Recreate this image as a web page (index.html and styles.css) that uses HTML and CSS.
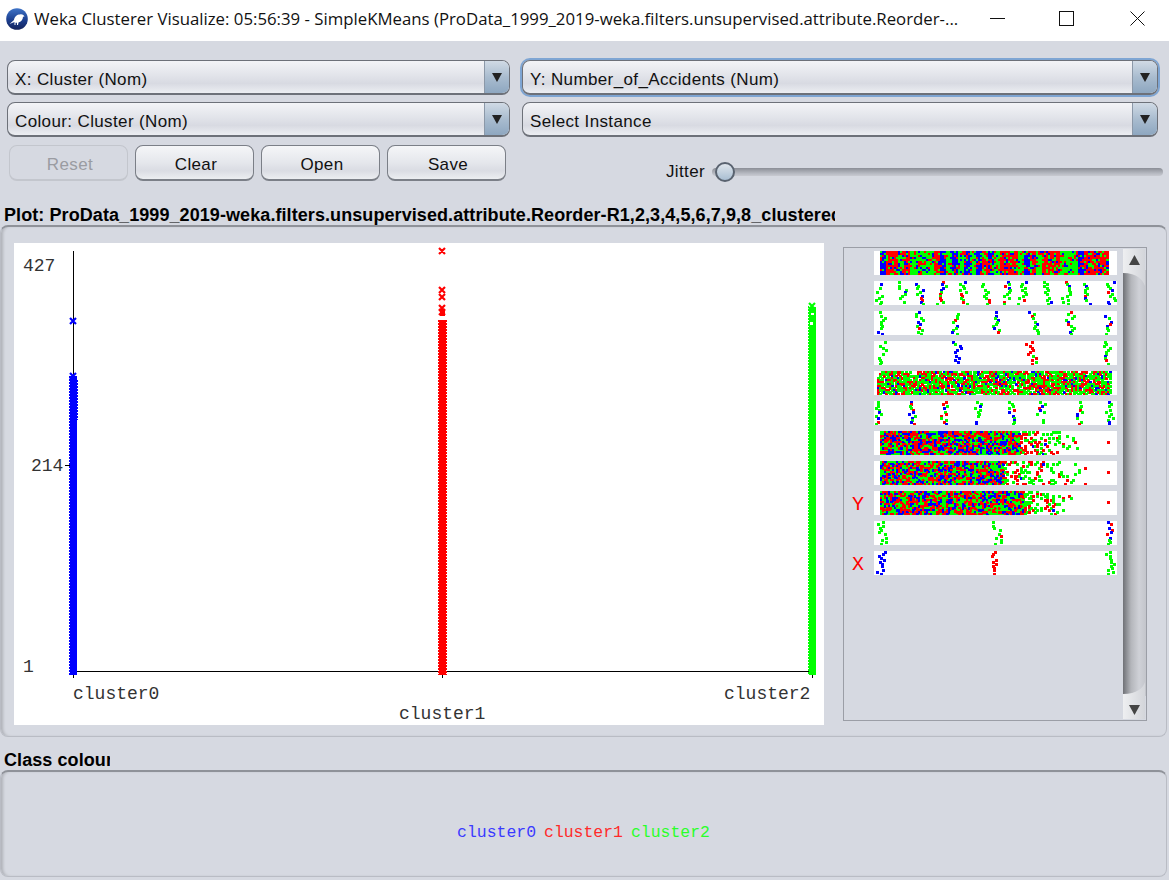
FILE: index.html
```html
<!DOCTYPE html>
<html lang="en">
<head>
    <meta charset="UTF-8">
    <title>Weka Clusterer Visualize</title>

    <link rel="stylesheet" href="styles.css">

</head>
<body>

<div class="titlebar">
    <svg class="app_icon" width="22" height="22" viewBox="0 0 22 22">
        <defs>
            <linearGradient id="icon_fill" x1="0" y1="0" x2="0" y2="1">
                <stop offset="0" stop-color="#3f74c8"/>
                <stop offset="0.55" stop-color="#1c3f8f"/>
                <stop offset="1" stop-color="#14235c"/>
            </linearGradient>
        </defs>
        <circle cx="11" cy="11" r="10.800" fill="url(#icon_fill)"/>
        <path d="M3.500 16 L8 12 C8.500 8.500 11 6.500 14 6.500 C15.500 6 17.500 6.500 18.500 8.500 L17 8.800 C17 11.500 15 14 12.500 14.500 L12 17 L11 17 L11 14.800 L9.500 14.800 L9.500 17 L8.500 17 L8.500 14 C7 14.800 5 15.500 3.500 16 Z" fill="#fff"/>
    </svg>
    <div class="title_text">Weka Clusterer Visualize: 05:56:39 - SimpleKMeans (ProData_1999_2019-weka.filters.unsupervised.attribute.Reorder-...</div>
    <svg class="win_btn win_min" width="15" height="15" viewBox="0 0 15 15"><path d="M0 7.500 H15" stroke="#111" fill="none"/></svg>
    <svg class="win_btn win_max" width="15" height="15" viewBox="0 0 15 15"><rect x="0.500" y="0.500" width="14" height="14" stroke="#111" fill="none"/></svg>
    <svg class="win_btn" width="15" height="15" viewBox="0 0 15 15"><path d="M0.500 0.500 L14.500 14.500 M14.500 0.500 L0.500 14.500" stroke="#111" fill="none"/></svg>
</div>

<div class="toolbar">
    <div class="tool_col tool_left">
        <div class="combo"><span class="combo_text">X: Cluster (Nom)</span><span class="combo_arrow"></span></div>
        <div class="combo"><span class="combo_text">Colour: Cluster (Nom)</span><span class="combo_arrow"></span></div>
        <div class="btn_row">
            <div class="btn btn_off">Reset</div>
            <div class="btn">Clear</div>
            <div class="btn">Open</div>
            <div class="btn">Save</div>
        </div>
    </div>
    <div class="tool_col tool_right">
        <div class="combo combo_focus"><span class="combo_text">Y: Number_of_Accidents (Num)</span><span class="combo_arrow"></span></div>
        <div class="combo"><span class="combo_text">Select Instance</span><span class="combo_arrow"></span></div>
        <div class="jitter">
            <span class="jitter_label">Jitter</span>
            <div class="slider"><span class="slider_thumb"></span></div>
        </div>
    </div>
</div>

<div class="heading heading_plot">Plot: ProData_1999_2019-weka.filters.unsupervised.attribute.Reorder-R1,2,3,4,5,6,7,9,8_clustered</div>
<div class="panel plot_panel">
    <svg class="plot" width="810" height="482" viewBox="14 243 810 482">
        <!-- 坐标轴 -->
        <g class="axis">
            <path d="M73.500 251 V678 M73 671.500 H812 M442.500 671 V678 M812.500 671 V678 M65 465.500 H70"/>
        </g>
        <!-- cluster0 -->
        <g class="col_blue">
            <rect x="70" y="376" width="7" height="299"/>
            <path class="edge" d="M69.500 376 V675 M77.500 380 V420"/>
            <path class="mark" d="M70 373 L76 379 M76 373 L70 379 M70 318 L76 324 M76 318 L70 324"/>
        </g>
        <!-- cluster1 -->
        <g class="col_red">
            <rect x="439" y="320" width="7" height="355"/>
            <path class="edge" d="M438.500 320 V675 M446.500 320 V675"/>
            <path class="mark" d="M439 248 L445 254 M445 248 L439 254 M439 287 L445 293 M445 287 L439 293 M439 294 L445 300 M445 294 L439 300 M439 305 L445 311 M445 305 L439 311 M439 309 L445 315 M445 309 L439 315"/>
            <rect x="440" y="309" width="5" height="7"/>
        </g>
        <!-- cluster2 -->
        <g class="col_green">
            <rect x="809" y="307" width="7" height="368"/>
            <path class="edge" d="M808.500 306 V675"/>
            <path class="mark" d="M809 303 L815 309 M815 303 L809 309"/>
            <rect class="hole" x="811" y="313" width="3" height="2"/>
            <rect class="hole" x="810" y="322" width="3" height="3"/>
        </g>
        <text x="23" y="271">427</text>
        <text x="31" y="471">214</text>
        <text x="23" y="672">1</text>
        <text x="73" y="699">cluster0</text>
        <text x="399" y="719">cluster1</text>
        <text x="724" y="699">cluster2</text>
    </svg>

    <div class="matrix">
        <div class="strips">
            <div class="strip_row"><span class="axis_tag"></span><canvas class="strip" width="243" height="24"></canvas></div>
            <div class="strip_row"><span class="axis_tag"></span><canvas class="strip" width="243" height="24"></canvas></div>
            <div class="strip_row"><span class="axis_tag"></span><canvas class="strip" width="243" height="24"></canvas></div>
            <div class="strip_row"><span class="axis_tag"></span><canvas class="strip" width="243" height="24"></canvas></div>
            <div class="strip_row"><span class="axis_tag"></span><canvas class="strip" width="243" height="24"></canvas></div>
            <div class="strip_row"><span class="axis_tag"></span><canvas class="strip" width="243" height="24"></canvas></div>
            <div class="strip_row"><span class="axis_tag"></span><canvas class="strip" width="243" height="24"></canvas></div>
            <div class="strip_row"><span class="axis_tag"></span><canvas class="strip" width="243" height="24"></canvas></div>
            <div class="strip_row"><span class="axis_tag">Y</span><canvas class="strip" width="243" height="24"></canvas></div>
            <div class="strip_row"><span class="axis_tag"></span><canvas class="strip" width="243" height="24"></canvas></div>
            <div class="strip_row"><span class="axis_tag">X</span><canvas class="strip" width="243" height="24"></canvas></div>
        </div>
        <svg class="scroll" width="23" height="472" viewBox="0 0 23 472">
            <defs>
                <linearGradient id="thumb_fill">
                    <stop offset="0" stop-color="#6f7176"/>
                    <stop offset="0.35" stop-color="#b4b6bb"/>
                    <stop offset="0.7" stop-color="#cfd1d7"/>
                    <stop offset="1" stop-color="#c3c5cb"/>
                </linearGradient>
                <linearGradient id="btn_fill">
                    <stop offset="0" stop-color="#eeeff1"/>
                    <stop offset="1" stop-color="#d3d5da"/>
                </linearGradient>
            </defs>
            <rect x="0" y="22" width="23" height="426" fill="url(#thumb_fill)"/>
            <path d="M1 1 H22 V38 C20 32 14 25 0 25 V1 Z" fill="url(#btn_fill)"/>
            <path d="M11.500 7 L17 17 H6 Z" fill="#444"/>
            <path d="M1 471 H22 V434 C20 440 14 446 0 446 V471 Z" fill="url(#btn_fill)"/>
            <path d="M11.500 467 L6 457 H17 Z" fill="#444"/>
        </svg>
    </div>
</div>

<div class="heading heading_class">Class colour</div>
<div class="panel legend_panel">
    <span class="legend_item legend_blue">cluster0</span>
    <span class="legend_item legend_red">cluster1</span>
    <span class="legend_item legend_green">cluster2</span>
</div>

<script src="script.js"></script>

</body>
</html>
```

FILE: styles.css
```css
* {
    margin: 0;
    padding: 0;
    box-sizing: border-box;
}

body {
    width: 1169px;
    height: 880px;
    overflow: hidden;
    background-color: #d6d9e1;
    font-family: "Liberation Sans", Arial, sans-serif;
    font-size: 17px;
    letter-spacing: 0.37px;
    color: #111;
}

/* 标题栏 */
.titlebar {
    height: 41px;
    background-color: #fff;
    display: flex;
    align-items: center;
    padding: 0 24px 4px 6px;
}

.app_icon {
    flex: none;
    margin-right: 6px;
}

.title_text {
    flex: 1;
    font-family: "Open Sans", sans-serif;
    font-size: 16.800px;
    letter-spacing: 0;
    white-space: nowrap;
    overflow: hidden;
}

.win_btn {
    flex: none;
}

.win_min {
    margin-right: 54px;
}

.win_max {
    margin-right: 56px;
}

/* 工具区 */
.toolbar {
    display: flex;
    gap: 12px;
    padding: 19px 0 0 7px;
}

.tool_col {
    display: flex;
    flex-direction: column;
    gap: 7px;
}

.tool_left {
    width: 503px;
}

.tool_right {
    width: 636px;
}

.combo {
    height: 35px;
    display: flex;
    border: 1px solid #6d7179;
    border-bottom-width: 2px;
    border-radius: 8px;
    overflow: hidden;
    background: linear-gradient(#f3f4f7, #e2e4ea 45%, #d8dae2 70%, #eceef2);
}

.combo_focus {
    box-shadow: 0 0 0 2px #7ea5d3;
}

.combo_text {
    flex: 1;
    line-height: 37px;
    padding-left: 7px;
}

.combo_arrow {
    flex: none;
    width: 25px;
    display: flex;
    align-items: center;
    justify-content: center;
    border-left: 1px solid #8b98a8;
    background: linear-gradient(#d0dae5, #a9bccf 50%, #8ea7c0);
}

.combo_arrow::after {
    content: "";
    border-left: 5px solid transparent;
    border-right: 5px solid transparent;
    border-top: 9px solid #222;
}

.btn_row {
    display: flex;
    gap: 7px;
    margin: 1px 0 0 2px;
}

.btn {
    width: 119px;
    height: 36px;
    line-height: 36px;
    padding: 1px 0 0 3px;
    text-align: center;
    border: 1px solid #7b7f87;
    border-bottom-width: 2px;
    border-radius: 8px;
    background: linear-gradient(#f5f6f8, #e5e7ec 50%, #dadce3 75%, #eceef1);
}

.btn_off {
    color: #9a9ca2;
    border-color: #c3c6cd;
    background: #d6d9e1;
}

.jitter {
    height: 36px;
    display: flex;
    align-items: center;
    padding: 18px 0 0 144px;
    margin-top: 1px;
}

.jitter_label {
    width: 46px;
    flex: none;
}

.slider {
    flex: none;
    width: 451px;
    height: 8px;
    position: relative;
    border-radius: 4px;
    background: linear-gradient(#8b8e96, #b8bbc3 70%, #c8cad1);
}

.slider_thumb {
    position: absolute;
    left: 3px;
    top: -6px;
    width: 20px;
    height: 20px;
    border: 2px solid #59626f;
    border-radius: 50%;
    background: linear-gradient(#dfe5ec, #a9bed2);
}

/* 分组标题 */
.heading {
    height: 19px;
    line-height: 19px;
    font-size: 18px;
    font-weight: bold;
    letter-spacing: 0.08px;
    padding-left: 4px;
    white-space: nowrap;
    overflow: hidden;
    color: #000;
}

.heading_plot {
    width: 835px;
    margin-top: 25px;
}

.heading_class {
    width: 110px;
    margin-top: 14px;
}

.panel {
    width: 1167px;
    border: 1px solid #b9bcc4;
    border-top: 2px solid #8f9299;
    border-radius: 8px;
    box-shadow: inset 3px 0 3px -1px rgba(0, 0, 0, 0.18);
}

.plot_panel {
    height: 512px;
    margin-top: 0;
    display: flex;
    align-items: flex-start;
    padding: 16px 0 0 13px;
}

/* 散点图 */
.plot {
    flex: none;
    display: block;
    background-color: #fff;
}

.plot text {
    font-family: "Liberation Mono", monospace;
    font-size: 18px;
    letter-spacing: 0;
    fill: #333;
}

.axis path {
    stroke: #000;
    fill: none;
    shape-rendering: crispEdges;
}

.edge {
    stroke-width: 1;
    stroke-dasharray: 2 1;
    fill: none;
    shape-rendering: crispEdges;
}

.mark {
    stroke-width: 2.200;
    fill: none;
}

.col_blue rect { fill: #0000ff; }
.col_blue path { stroke: #0000ff; }
.col_red rect { fill: #ff0000; }
.col_red path { stroke: #ff0000; }
.col_green rect { fill: #00ff00; }
.col_green path { stroke: #00ff00; }
.col_green .hole { fill: #fff; }

/* 散点矩阵 */
.matrix {
    flex: none;
    width: 304px;
    height: 474px;
    margin: 4px 0 0 19px;
    display: flex;
    border: 1px solid #9b9ea6;
}

.strips {
    flex: none;
    width: 279px;
    padding: 3px 0 0 1px;
    display: flex;
    flex-direction: column;
    gap: 6px;
}

.strip_row {
    height: 24px;
    display: flex;
    align-items: center;
}

.axis_tag {
    flex: none;
    width: 29px;
    padding: 3px 0 0 7px;
    font-family: "Liberation Mono", monospace;
    font-size: 20px;
    letter-spacing: 0;
    color: #ff0000;
}

.strip {
    flex: none;
    display: block;
}

.scroll {
    flex: none;
    display: block;
}

/* 图例 */
.legend_panel {
    height: 107px;
    display: flex;
    align-items: center;
    justify-content: center;
    gap: 8px;
    padding-top: 16px;
    font-family: "Liberation Mono", monospace;
    font-size: 16.460px;
    letter-spacing: 0;
}

.legend_blue { color: #3a3aff; }
.legend_red { color: #ff2a2a; }
.legend_green { color: #2aff2a; }
```

FILE: script.js
```js
// 固定种子的随机数，每次画出来都一样
let seed = 20190;

function rnd() {
    seed = (seed * 16807) % 2147483647;
    return seed / 2147483647;
}

const BLUE = '#0000ff';
const RED = '#ff0000';
const GREEN = '#00ff00';

// 按权重取颜色
function pick(weights) {
    let r = rnd();
    if (r < weights[0]) return BLUE;
    if (r < weights[0] + weights[1]) return RED;
    return GREEN;
}

function dot(ctx, x, y, color) {
    ctx.fillStyle = color;
    ctx.fillRect(Math.round(x), Math.round(y), 3, 3);
}

// 整块的竖条纹
function bands(ctx) {
    let base = BLUE;
    for (let x = 6; x < 233; x += 2) {
        if (x % 6 === 0) {
            base = pick([0.38, 0.22, 0.4]);
        }
        for (let y = 0; y < 23; y += 2) {
            dot(ctx, x, y, rnd() < 0.55 ? base : pick([0.25, 0.35, 0.4]));
        }
    }
}

// 几列离散的点
function columns(ctx, list, weights) {
    list.forEach(function (cx) {
        let drift = 0;
        for (let y = 0; y < 23; y += 2) {
            drift += (rnd() - 0.5) * 3;
            drift = Math.max(-3, Math.min(3, drift));
            if (rnd() < 0.9) {
                dot(ctx, cx + drift - 1 + (rnd() - 0.5) * 7, y, pick(weights));
            }
        }
    });
}

// 满幅噪点
function noise(ctx) {
    for (let x = 3; x < 236; x += 2) {
        for (let y = 0; y < 23; y += 2) {
            if (rnd() < 0.8) {
                dot(ctx, x, y, pick([0.1, 0.36, 0.54]));
            }
        }
    }
}

// 左密右疏
function fade(ctx, solid, end) {
    ctx.fillStyle = GREEN;
    ctx.fillRect(6, 0, solid - 6, 24);
    for (let x = 6; x < end; x += 2) {
        let keep = x < solid ? 1 : Math.pow(1 - (x - solid) / (end - solid), 1.4) * 0.6;
        let blue = x < solid ? 0.3 : 0.03;
        for (let y = 0; y < 23; y += 2) {
            if (rnd() < keep * 0.75) {
                dot(ctx, x, y, pick([blue, 0.42, 0.58 - blue]));
            }
        }
    }
    // 右边零星的红点
    dot(ctx, 233, 10, RED);
}

const MIX = [0.22, 0.13, 0.65];
const STRIPS = [
    bands,
    function (ctx) { columns(ctx, [7, 26, 46, 69, 89, 109, 131, 150, 172, 193, 213, 235], MIX); },
    function (ctx) { columns(ctx, [7, 44, 82, 121, 158, 196, 234], MIX); },
    function (ctx) {
        columns(ctx, [8], [0, 0.1, 0.9]);
        columns(ctx, [81], [0.9, 0, 0.1]);
        columns(ctx, [158], [0, 0.7, 0.3]);
        columns(ctx, [235], [0.1, 0.1, 0.8]);
    },
    noise,
    function (ctx) { columns(ctx, [6, 38, 70, 104, 136, 169, 203, 234], MIX); },
    function (ctx) { fade(ctx, 146, 216); },
    function (ctx) { fade(ctx, 130, 220); },
    function (ctx) { fade(ctx, 150, 212); },
    function (ctx) {
        columns(ctx, [7], [0, 0.05, 0.95]);
        columns(ctx, [121], [0, 0.1, 0.9]);
        columns(ctx, [235], [0.4, 0.25, 0.35]);
    },
    function (ctx) {
        columns(ctx, [7], [1, 0, 0]);
        columns(ctx, [121], [0, 1, 0]);
        columns(ctx, [235], [0, 0, 1]);
    }
];

let canvases = document.querySelectorAll('.strip');

canvases.forEach(function (canvas, i) {
    let ctx = canvas.getContext('2d');
    ctx.fillStyle = '#fff';
    ctx.fillRect(0, 0, canvas.width, canvas.height);
    STRIPS[i](ctx);
});
```
